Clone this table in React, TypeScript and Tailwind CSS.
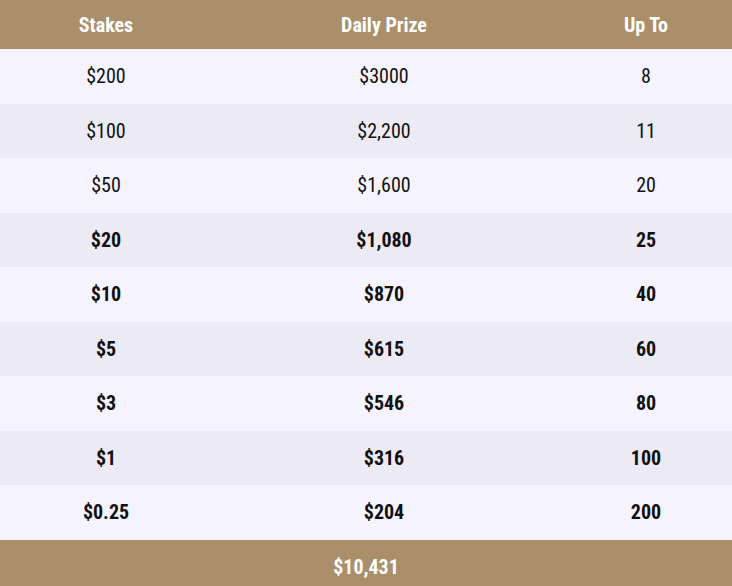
import React from "react";

type Row = {
	stake: string;
	prize: string;
	upTo: string;
	bold?: boolean;
};

const rows: Row[] = [
	{ stake: "$200", prize: "$3000", upTo: "8" },
	{ stake: "$100", prize: "$2,200", upTo: "11" },
	{ stake: "$50", prize: "$1,600", upTo: "20" },
	{ stake: "$20", prize: "$1,080", upTo: "25", bold: true },
	{ stake: "$10", prize: "$870", upTo: "40", bold: true },
	{ stake: "$5", prize: "$615", upTo: "60", bold: true },
	{ stake: "$3", prize: "$546", upTo: "80", bold: true },
	{ stake: "$1", prize: "$316", upTo: "100", bold: true },
	{ stake: "$0.25", prize: "$204", upTo: "200", bold: true },
];

export default function App() {
	return (
		<div
			className="w-[732px] h-[586px] flex flex-col text-[20px] [font-stretch:condensed]"
			style={{ fontFamily: '"Roboto Condensed", Roboto, "Liberation Sans", sans-serif' }}
		>
			<div className="grid grid-cols-[212px_344px_176px] h-[49px] items-center bg-[#ab8f6a] text-white font-bold">
				<div className="text-center">Stakes</div>
				<div className="text-center">Daily Prize</div>
				<div className="text-center pl-1">Up To</div>
			</div>
			{rows.map((row, i) => (
				<div
					key={i}
					className={`grid grid-cols-[212px_344px_176px] h-[54.5px] items-center text-[#111] ${
						i % 2 === 0 ? "bg-[#f5f3fd]" : "bg-[#eceaf4]"
					} ${row.bold ? "font-bold" : "font-normal"}`}
				>
					<div className="text-center">{row.stake}</div>
					<div className="text-center">{row.prize}</div>
					<div className="text-center pl-1">{row.upTo}</div>
				</div>
			))}
			<div className="flex-1 flex items-center justify-center pt-2 bg-[#ab8f6a] text-white font-bold">
				$10,431
			</div>
		</div>
	);
}
